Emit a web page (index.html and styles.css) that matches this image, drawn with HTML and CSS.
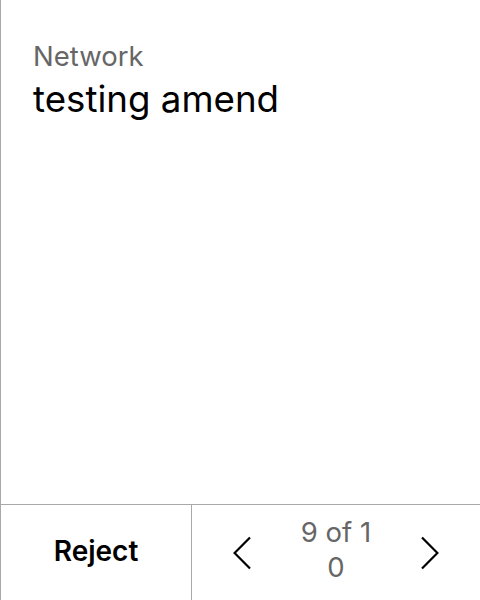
FILE: index.html
```html
<!DOCTYPE html>
<html lang="en">
<head>
<meta charset="utf-8">
<title>Network</title>
<link rel="stylesheet" href="styles.css">
</head>
<body>
<div class="panel">
  <div class="content">
    <div class="label">Network</div>
    <div class="title">testing amend</div>
  </div>
  <div class="footer">
    <button class="reject" type="button">Reject</button>
    <div class="pager">
      <button class="nav" type="button" aria-label="Previous">
        <svg width="18" height="34" viewBox="0 0 18 34" fill="none" stroke="#000" stroke-width="2.2"><path d="M17 1.5 L1.6 17 L17 32.5"/></svg>
      </button>
      <div class="count"><span class="count-text">9 of 10</span></div>
      <button class="nav" type="button" aria-label="Next">
        <svg width="18" height="34" viewBox="0 0 18 34" fill="none" stroke="#000" stroke-width="2.2"><path d="M1 1.5 L16.4 17 L1 32.5"/></svg>
      </button>
    </div>
  </div>
</div>
</body>
</html>
```

FILE: styles.css
```css
* { box-sizing: border-box; }
html, body { margin: 0; padding: 0; background: #fff; }
body {
  font-family: Inter, "Noto Sans", sans-serif;
}
.panel {
  width: 480px;
  height: 600px;
  border-left: 1px solid #a8a8a8;
  display: flex;
  flex-direction: column;
}
.content {
  flex: 1;
  padding: 39px 32px 0 32px;
}
.label {
  font-size: 27.5px;
  line-height: 34px;
  color: #666;
}
.title {
  font-size: 36.7px;
  line-height: 44px;
  color: #000;
  margin-top: 4px;
}
.footer {
  height: 96px;
  border-top: 1px solid #a8a8a8;
  display: grid;
  grid-template-columns: 191px 1fr;
}
.reject {
  border: 0;
  border-right: 1px solid #a8a8a8;
  background: none;
  font-family: inherit;
  font-size: 28px;
  font-weight: 600;
  color: #000;
  padding: 0 0 3px 0;
  cursor: pointer;
}
.pager {
  display: flex;
  align-items: center;
  padding: 0 22px;
}
.nav {
  width: 56px;
  height: 56px;
  border: 0;
  background: none;
  padding: 0;
  display: flex;
  align-items: center;
  justify-content: center;
  cursor: pointer;
}
.count {
  flex: 1;
  display: flex;
  justify-content: center;
  padding-bottom: 6px;
}
.count-text {
  width: 78px;
  text-align: center;
  font-size: 27.5px;
  line-height: 35px;
  color: #666;
  word-break: break-all;
}
```
